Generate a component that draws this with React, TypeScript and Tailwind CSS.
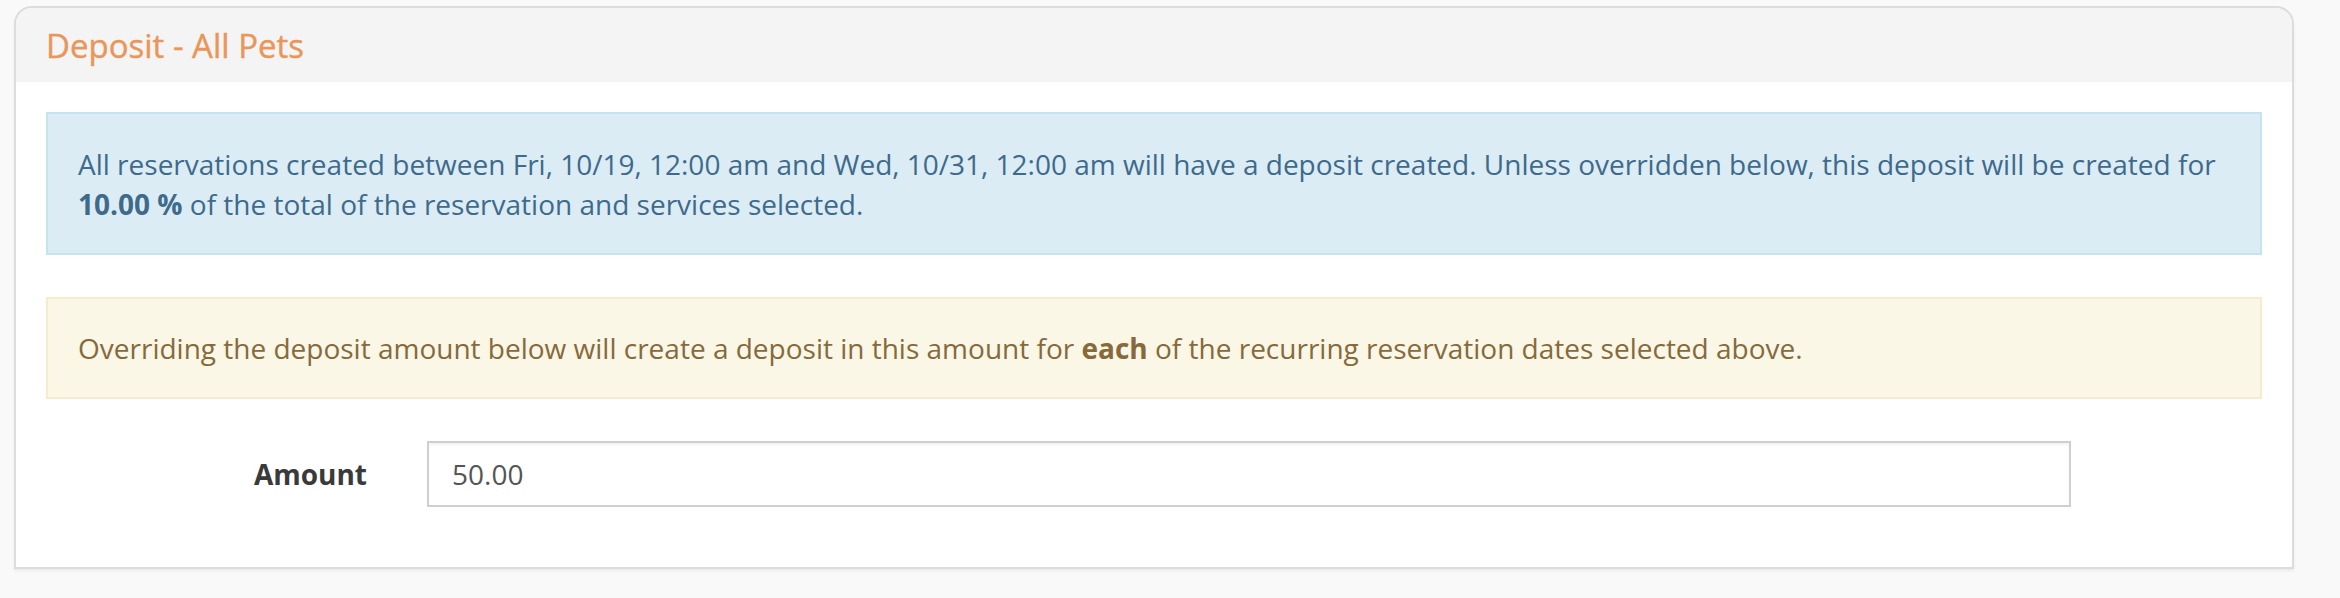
import React from "react";

export default function App() {
  return (
    <div
      className="w-[2340px] h-[598px] bg-[#f9f9f9] pt-[6px] pl-[14px]"
      style={{ fontFamily: '"Open Sans", "Noto Sans", sans-serif' }}
    >
      <div className="w-[2280px] border-2 border-[#dcdcdc] rounded-t-[18px] bg-white shadow-[0_2px_3px_rgba(0,0,0,0.06)]">
        <div className="h-[74px] bg-[#f4f4f4] rounded-t-[16px] flex items-center pl-[30px]">
          <h3 className="text-[33px] leading-none font-normal text-[#e8965a] [-webkit-text-stroke:0.4px_#e8965a]">Deposit - All Pets</h3>
        </div>
        <div className="pt-[30px] px-[30px] pb-[60px]">
          <div className="border-2 border-[#c4e5ef] bg-[#dcecf5] text-[#3e6a8c] text-[28px] leading-[40px] px-[30px] pt-[30px] pb-[29px]">
            All reservations created between Fri, 10/19, 12:00 am and Wed, 10/31, 12:00 am will have a deposit created. Unless overridden below, this deposit will be created for{" "}
            <b className="font-bold">10.00 %</b> of the total of the reservation and services selected.
          </div>
          <div className="mt-[42px] border-2 border-[#f6ebcd] bg-[#faf7e6] text-[#866a3c] text-[28px] leading-[40px] px-[30px] py-[29px]">
            Overriding the deposit amount below will create a deposit in this amount for{" "}
            <b className="font-bold">each</b> of the recurring reservation dates selected above.
          </div>
          <div className="mt-[42px] flex items-center">
            <label className="w-[321px] text-right text-[28px] font-bold text-[#3a3a3a]">Amount</label>
            <div className="ml-[60px] w-[1644px] h-[66px] border-2 border-[#cfcfcf] shadow-[inset_0_2px_2px_rgba(0,0,0,0.05)] flex items-center pl-[23px] text-[28px] text-[#555555]">
              50.00
            </div>
          </div>
        </div>
      </div>
    </div>
  );
}
